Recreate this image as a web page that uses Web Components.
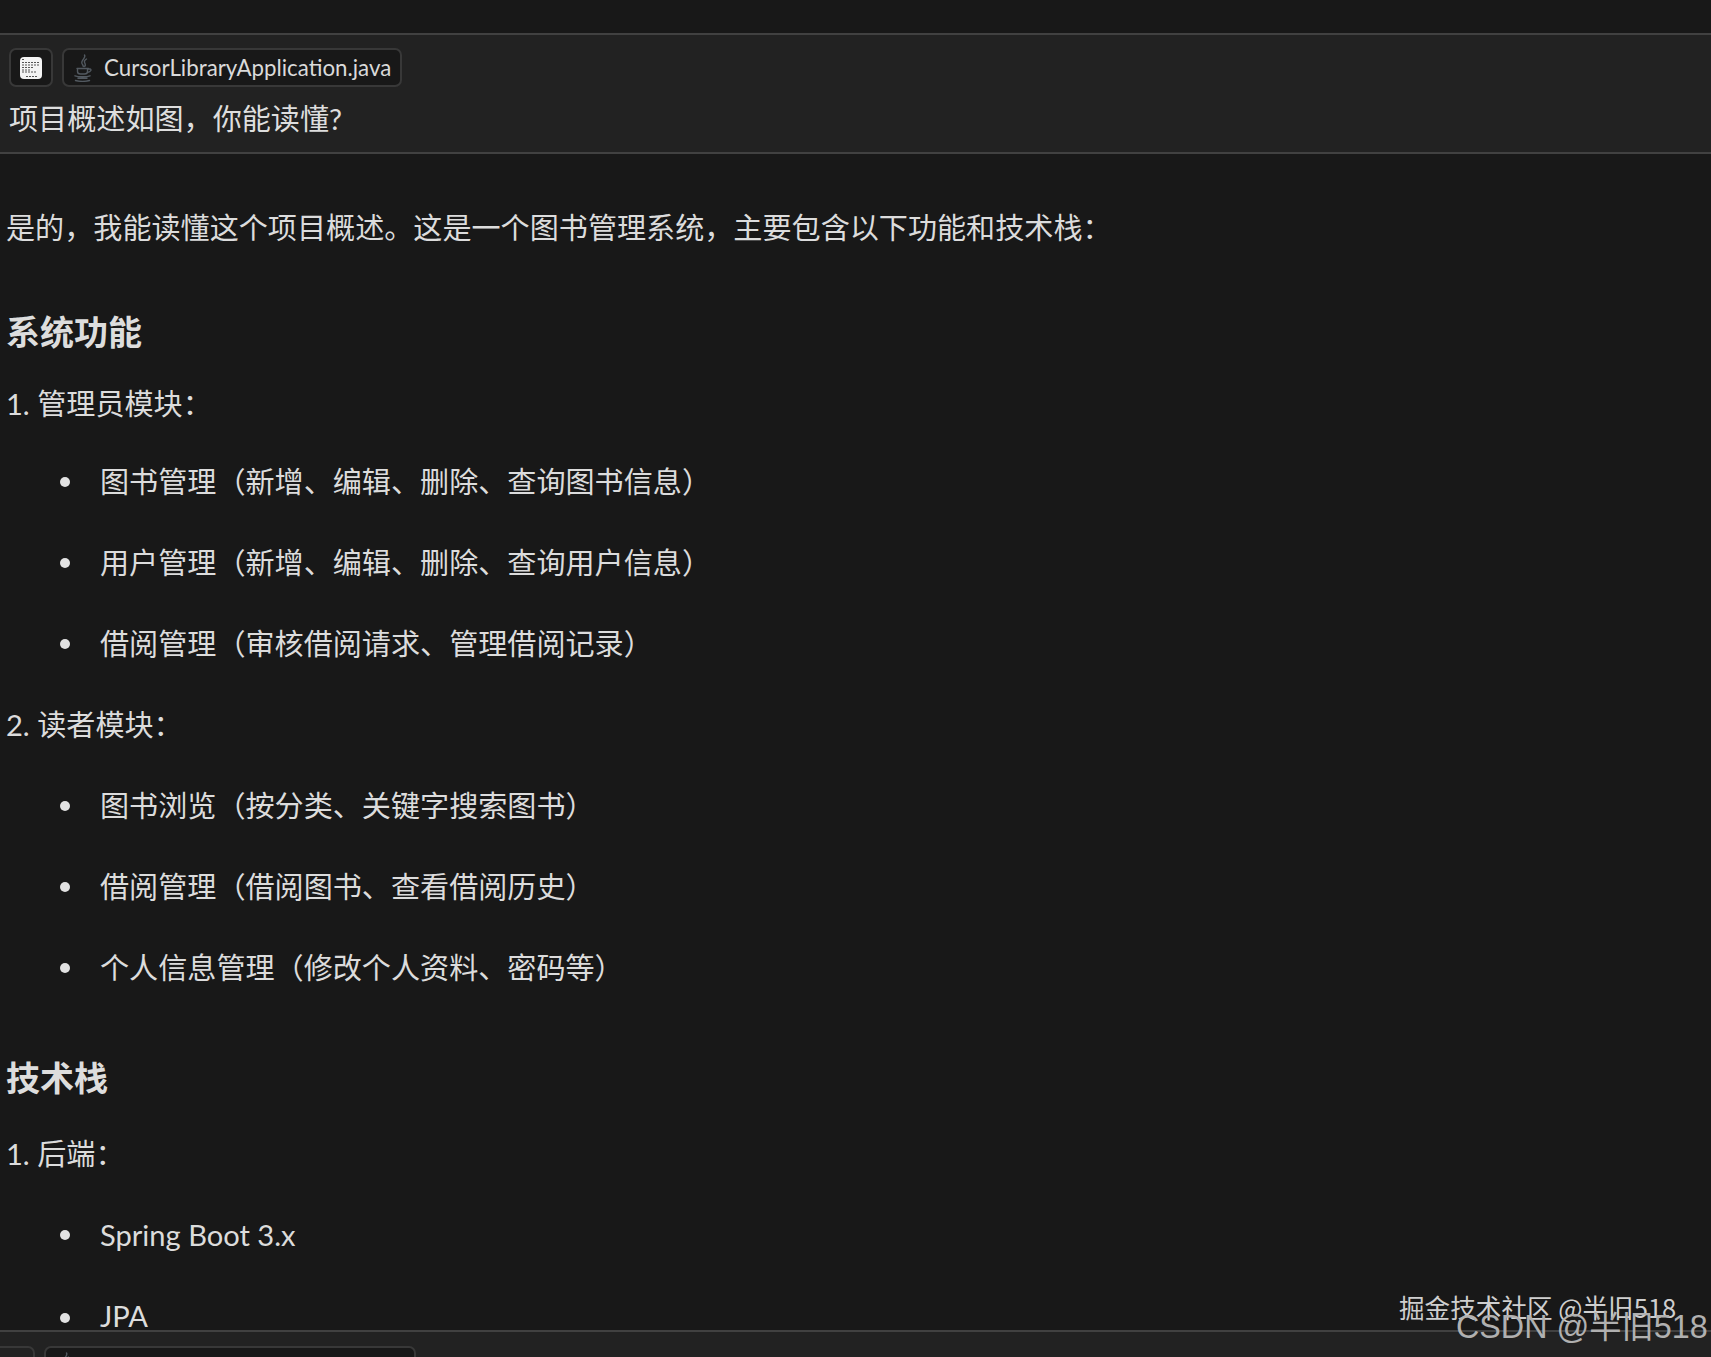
<!DOCTYPE html>
<html lang="zh">
<head>
<meta charset="utf-8">
<title>Chat</title>
<style>
  html, body { margin: 0; background: #181818; }
  body { font-family: Lato, "Noto Sans CJK SC", sans-serif; color: #dcdcdc; }
</style>
</head>
<body>
<chat-app>
  <chat-bubble>
    <thumb-chip slot="chips"></thumb-chip>
    <file-chip slot="chips">CursorLibraryApplication.java</file-chip>
    项目概述如图，你能读懂?
  </chat-bubble>
  <chat-reply>
    <md-text intro>是的，我能读懂这个项目概述。这是一个图书管理系统，主要包含以下功能和技术栈：</md-text>
    <md-heading>系统功能</md-heading>
    <md-text short>1. 管理员模块：</md-text>
    <md-item>图书管理（新增、编辑、删除、查询图书信息）</md-item>
    <md-item>用户管理（新增、编辑、删除、查询用户信息）</md-item>
    <md-item>借阅管理（审核借阅请求、管理借阅记录）</md-item>
    <md-text>2. 读者模块：</md-text>
    <md-item>图书浏览（按分类、关键字搜索图书）</md-item>
    <md-item>借阅管理（借阅图书、查看借阅历史）</md-item>
    <md-item>个人信息管理（修改个人资料、密码等）</md-item>
    <md-heading later>技术栈</md-heading>
    <md-text>1. 后端：</md-text>
    <md-item>Spring Boot 3.x</md-item>
    <md-item last>JPA</md-item>
  </chat-reply>
  <chat-bubble clipped>
    <thumb-chip slot="chips" blank></thumb-chip>
    <file-chip slot="chips" wide></file-chip>
  </chat-bubble>
  <water-mark></water-mark>
</chat-app>

<script>
function define(name, css, html) {
  class El extends HTMLElement {
    constructor() {
      super();
      this.attachShadow({ mode: 'open' }).innerHTML = '<style>' + css + '</style>' + html;
    }
  }
  customElements.define(name, El);
}

define('chat-app', `
  :host { display: flex; flex-direction: column; position: relative; height: 1357px; overflow: hidden;
          padding-top: 33px; box-sizing: border-box; background: #181818; }
`, '<slot></slot>');

define('chat-bubble', `
  :host { display: block; flex: none; box-sizing: border-box; height: 121px; background: #222222;
          border-top: 2px solid #414141; border-bottom: 2px solid #414141; padding: 13px 9px 0;
          font-size: 29.1px; line-height: 40px; color: #dedede; }
  :host([clipped]) { height: 60px; border-bottom: 0; padding-top: 14px; padding-left: 0; }
  .chips { display: flex; gap: 9px; margin-bottom: 12px; }
  :host([clipped]) .chips { margin-left: -9px; }
`, '<div class="chips"><slot name="chips"></slot></div><slot></slot>');

define('thumb-chip', `
  :host { display: flex; align-items: center; justify-content: center; box-sizing: border-box;
          width: 44px; height: 39px; background: #181818; border: 2px solid #383838; border-radius: 7px; }
  :host([blank]) { background: #222222; }
  :host([blank]) svg { visibility: hidden; }
  svg { display: block; }
`, `<svg width="22" height="22" viewBox="0 0 22 22">
  <rect width="22" height="22" rx="4" fill="#f4f4f4"/>
  <g stroke="#555" stroke-width="1" stroke-dasharray="2 1">
    <path d="M2 2.500h2M2 5.500h18M2 8h18M2 10.500h12M2 13h9M2 15h15M6 19.500h11"/>
  </g>
</svg>`);

define('file-chip', `
  :host { display: flex; align-items: center; box-sizing: border-box; width: 340px; height: 39px; padding-left: 8px;
          background: #181818; border: 2px solid #383838; border-radius: 7px;
          font-size: 22.3px; line-height: 32px; color: #dadada; }
  :host([wide]) { width: 372px; }
  svg { flex: none; margin-right: 10px; }
  span { padding-top: 1px; }
`, `<svg width="22" height="28" viewBox="0 0 22 28" fill="none" stroke="#525960" stroke-width="1.4" stroke-linecap="round">
  <path d="M12.500 1c2 3-4 5-2.500 8.500 .6 1.300 1.300 2 1.300 3M14.500 5c-2.500 1.500-2.500 3-1.500 4.500 .6 1 .5 2-.3 3"/>
  <path d="M5 14.500h11.500M5.500 14.500v3c0 1.500 1.500 2.500 3 2.500h4c1.500 0 3-1 3-2.500v-3M15.500 15h2.500c1.600 0 1.600 3-2.800 3.500"/>
  <path d="M3 21.800c3 1.200 12 1.200 15 0M6 24.300h9M3.500 26.500c4 1 10 1 14 0"/>
</svg><span><slot></slot></span>`);

define('chat-reply', `
  :host { display: block; flex: none; box-sizing: border-box; height: 1176px; padding: 54px 0 0 6px;
          font-size: 29.1px; color: #dcdcdc; }
`, '<slot></slot>');

define('md-text', `
  :host { display: block; height: 81px; line-height: 40px; white-space: nowrap; }
  :host([intro]) { height: 86px; margin-bottom: 18px; }
  :host([short]) { height: 78px; }
`, '<slot></slot>');

define('md-heading', `
  :host { display: block; height: 52px; margin-bottom: 20px; line-height: 40px;
          font-size: 34px; font-weight: 700; color: #dddddd; white-space: nowrap; }
  :host([later]) { margin-top: 29px; margin-bottom: 24px; }
`, '<slot></slot>');

/* last row sits right on the next bubble's edge */
define('md-item', `
  :host { display: flex; align-items: flex-start; height: 81px; line-height: 40px; white-space: nowrap; }
  :host([last]) { height: 36px; line-height: 36px; padding-top: 2px; box-sizing: border-box; }
  i { flex: none; width: 10px; height: 10px; margin: 15px 30px 0 54px; border-radius: 50%; background: #e2e2e2; }
`, '<i></i><slot></slot>');

define('water-mark', `
  :host { position: absolute; inset: 0; pointer-events: none; color: #cfcfcf; font-family: "Noto Sans CJK SC", sans-serif; }
  .juejin { position: absolute; left: 1399px; top: 1289px; font-size: 25.6px; line-height: 36px; white-space: nowrap; }
  .csdn { position: absolute; left: 1456px; top: 1305px; font-size: 32.3px; line-height: 44px; white-space: nowrap; color: #b0b0b0; font-family: "Liberation Sans", "Noto Sans CJK SC", sans-serif; }
`, '<div class="juejin">掘金技术社区 @半旧518</div><div class="csdn">CSDN @半旧518</div>');
</script>
</body>
</html>
